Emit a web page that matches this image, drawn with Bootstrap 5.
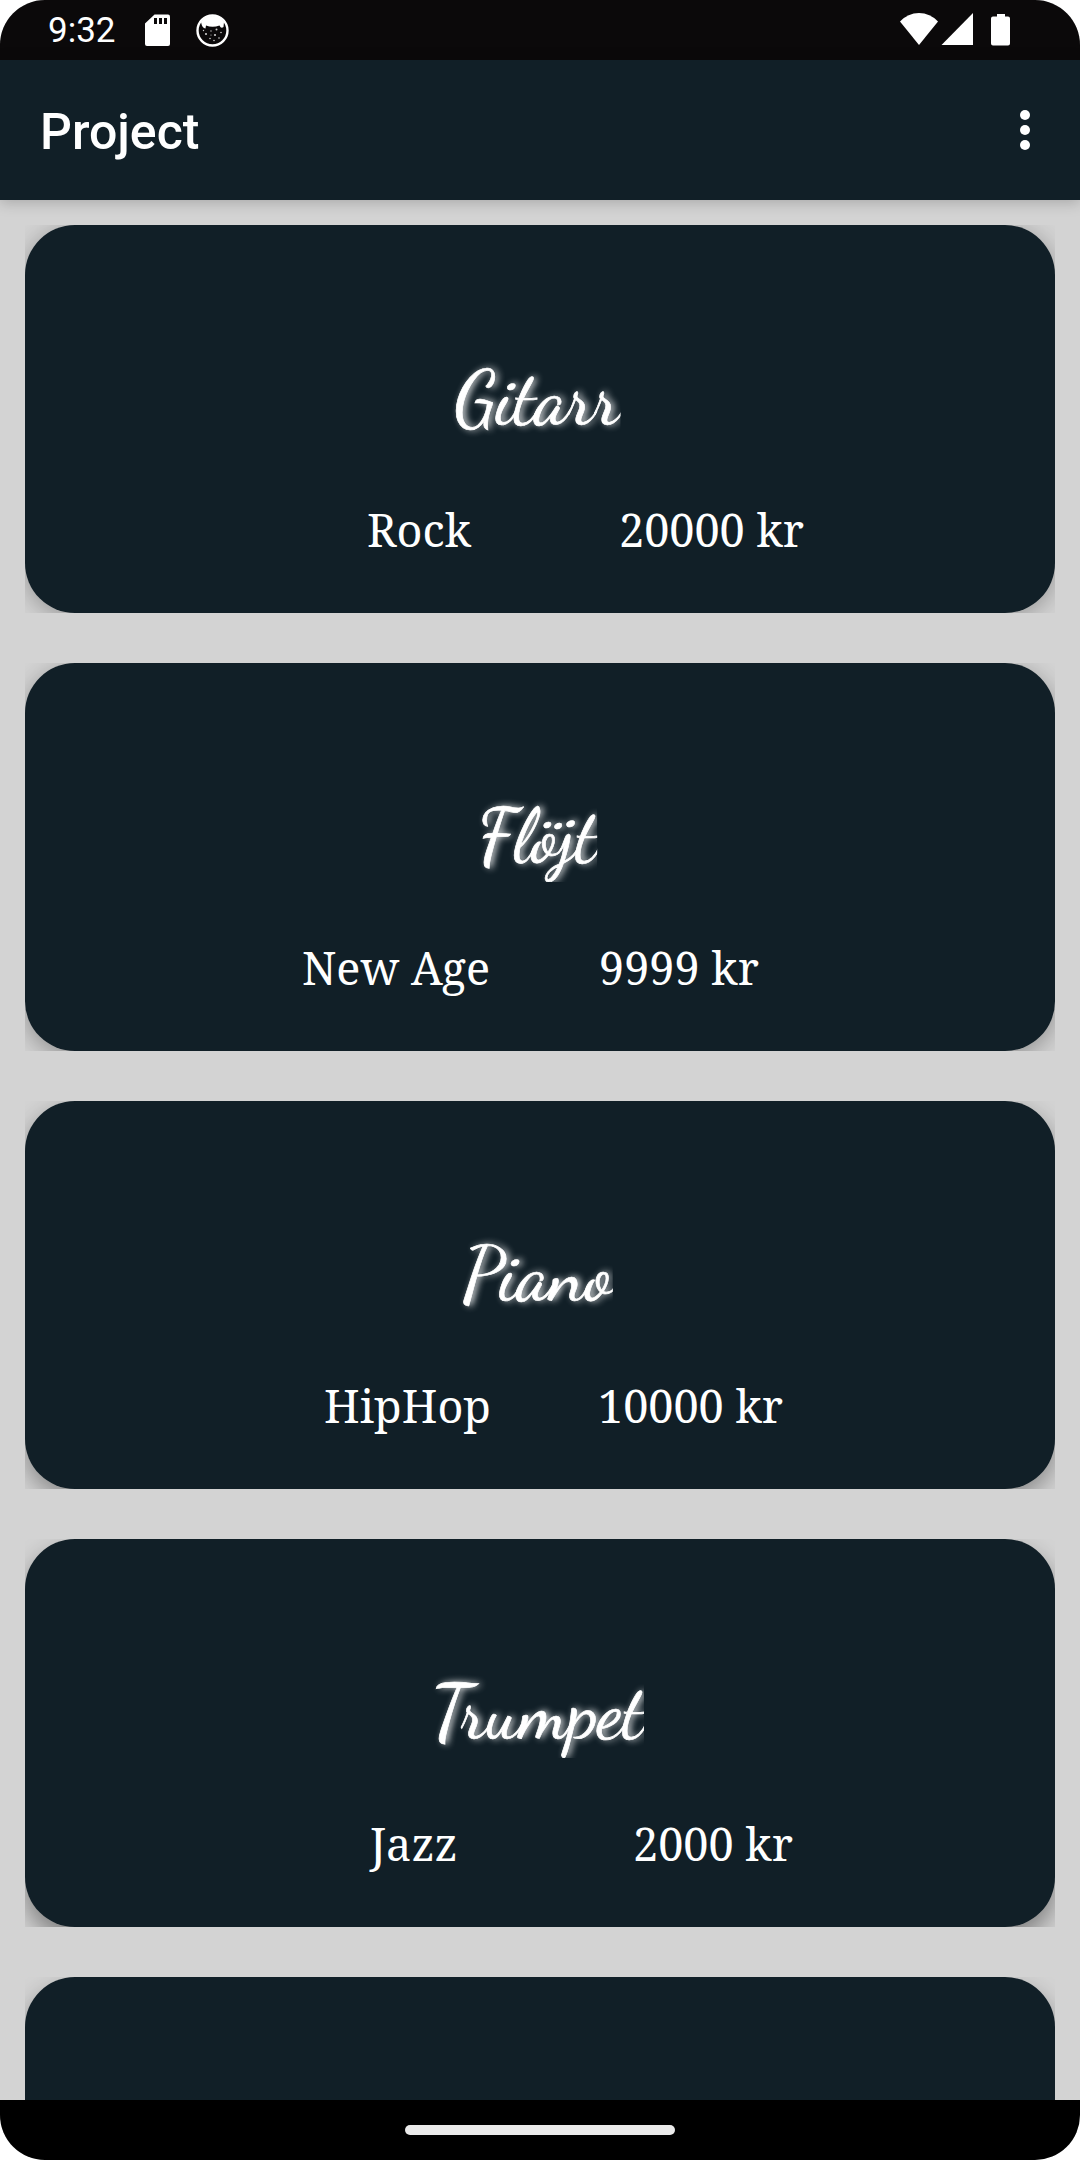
<!DOCTYPE html>
<html lang="sv">
<head>
<meta charset="utf-8">
<meta name="viewport" content="width=device-width, initial-scale=1">
<title>Project</title>
<link href="https://cdn.jsdelivr.net/npm/bootstrap@5.3.0/dist/css/bootstrap.min.css" rel="stylesheet">
<style>
body{background:#fff}
.phone{width:1080px;height:2160px;border-radius:45px;background:#d3d3d3}
.statusbar{height:60px;background:#0b090a;padding-left:48px;padding-right:70px}
.clock{font:35px/60px Roboto,sans-serif;width:97px;margin-top:2px}
.appbar{height:140px;background:#111f27;padding:0 50px 0 40px;box-shadow:0 2px 14px rgba(0,0,0,.22);z-index:2}
.apptitle{font:500 50px/60px Roboto,sans-serif;margin-top:4px}
.feed{padding:25px 25px 0;gap:50px}
.tile{height:388px;overflow:hidden}
.tile-face{--shade:.3;--lift:4px;height:388px;border-radius:50px;background:#111f27;color:#fff;box-shadow:0 var(--lift) 24px rgba(0,0,0,var(--shade));padding-top:129px}
.script{font:400 75px/90px "Dancing Script",cursive;height:90px;margin-right:5px;-webkit-text-stroke:.7px #fff;text-shadow:3px 0 7px rgba(255,255,255,.95);clip-path:inset(-10px 0 0 -8px)}
.facts{font:45px/62px "Noto Serif",serif;margin-top:55px;white-space:nowrap}
.facts-rock{padding-left:342px;grid-template-columns:252px auto}
.facts-newage{padding-left:277px;grid-template-columns:297px auto}
.facts-hiphop{padding-left:299px;grid-template-columns:274px auto}
.facts-jazz{padding-left:345px;grid-template-columns:263px auto}
.face-2{--shade:.32;--lift:6px}
.face-3{--shade:.36;--lift:9px}
.face-4,.face-5{--shade:.4;--lift:12px}
.navpad{height:60px;background:#000}
.homepill{width:270px;height:10px;border-radius:5px;background:#ebebeb}
</style>
<script src="https://cdn.jsdelivr.net/npm/bootstrap@5.3.0/dist/js/bootstrap.bundle.min.js"></script>
</head>
<body>
<div class="phone d-flex flex-column overflow-hidden">
  <div class="statusbar d-flex align-items-center text-white flex-shrink-0">
    <div class="clock">9:32</div>
    <svg width="25" height="60" viewBox="0 0 25 60"><path fill="#fff" d="M9.5 14.5H23q2 0 2 2V44q0 2-2 2H2q-2 0-2-2V23.500z"/><path fill="#0b090a" d="M9 18h3v6H9zM14 18h3v6h-3zM19 18h3v6h-3z"/></svg>
    <svg class="ms-4" width="36" height="60" viewBox="0 0 36 60"><circle cx="18.500" cy="30.500" r="15" fill="#0b090a" stroke="#fff" stroke-width="2.400"/><path fill="#fff" d="M7 22Q11 16 18.500 16T30 22L29.500 27Q27 29 25.500 25.500Q18.500 28 12 25.500L11.500 28.500Q8 28 7 22z"/><g fill="#ccc"><circle cx="12" cy="34" r="1.100"/><circle cx="22.500" cy="29.500" r="1"/><circle cx="21" cy="35" r="1.100"/><circle cx="17" cy="31" r=".7"/><circle cx="27" cy="32.500" r=".8"/><circle cx="16" cy="38.500" r=".8"/><circle cx="25" cy="38" r=".8"/><circle cx="20" cy="40.500" r=".8"/><circle cx="9.500" cy="30.500" r=".7"/><circle cx="17" cy="35" r=".6"/></g></svg>
    <svg class="ms-auto" width="110" height="60" viewBox="900 0 110 60" fill="#fff"><path d="M900 21.500Q908 13 919 13T938 21.500L919 45z"/><path d="M973 13V45H941.500z"/><path d="M997 14h8v2.500h3q2 0 2 2V43.500q0 2-2 2H993q-2 0-2-2V18.500q0-2 2-2h4z"/></svg>
  </div>
  <header class="appbar d-flex align-items-center justify-content-between text-white flex-shrink-0">
    <div class="apptitle">Project</div>
    <svg width="10" height="60" viewBox="0 90 10 60" fill="#fff"><circle cx="5" cy="105" r="5"/><circle cx="5" cy="120" r="5"/><circle cx="5" cy="135" r="5"/></svg>
  </header>
  <main class="feed d-flex flex-column flex-grow-1 overflow-hidden">
    <section class="tile flex-shrink-0"><div class="tile-face d-flex flex-column">
      <div class="script align-self-center">Gitarr</div>
      <div class="facts facts-rock d-grid"><span>Rock</span><span>20000 kr</span></div>
    </div></section>
    <section class="tile flex-shrink-0"><div class="tile-face face-2 d-flex flex-column">
      <div class="script align-self-center">Flöjt</div>
      <div class="facts facts-newage d-grid"><span>New Age</span><span>9999 kr</span></div>
    </div></section>
    <section class="tile flex-shrink-0"><div class="tile-face face-3 d-flex flex-column">
      <div class="script align-self-center">Piano</div>
      <div class="facts facts-hiphop d-grid"><span>HipHop</span><span>10000 kr</span></div>
    </div></section>
    <section class="tile flex-shrink-0"><div class="tile-face face-4 d-flex flex-column">
      <div class="script align-self-center">Trumpet</div>
      <div class="facts facts-jazz d-grid"><span>Jazz</span><span>2000 kr</span></div>
    </div></section>
    <section class="tile flex-shrink-0"><div class="tile-face face-5"></div></section>
  </main>
  <footer class="navpad d-flex align-items-center justify-content-center flex-shrink-0"><div class="homepill"></div></footer>
</div>
</body>
</html>
